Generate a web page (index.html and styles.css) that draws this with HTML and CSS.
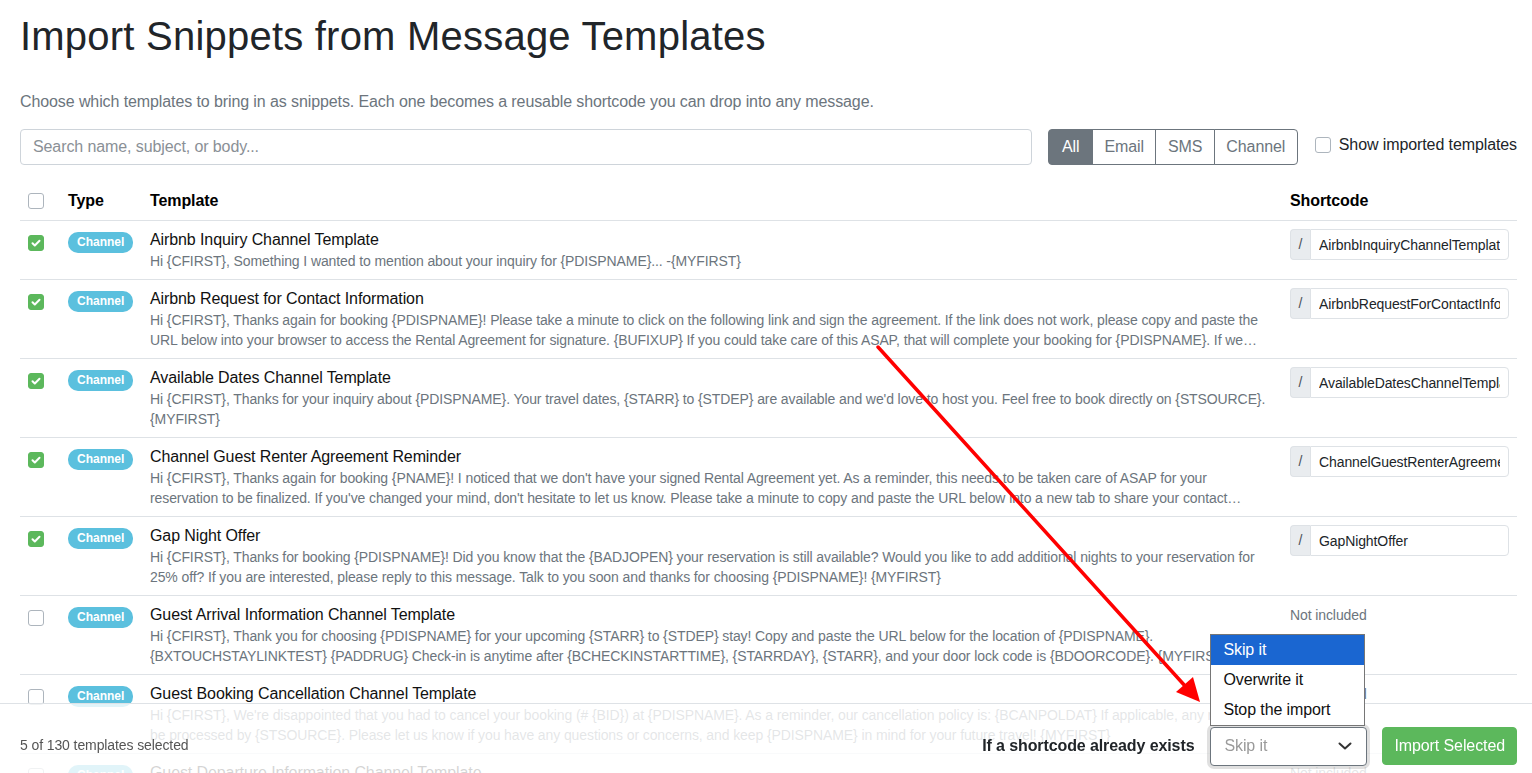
FILE: index.html
```html
<!DOCTYPE html>
<html lang="en">
<head>
<meta charset="utf-8">
<title>Import Snippets from Message Templates</title>
<link rel="stylesheet" href="styles.css">
</head>
<body>
<div class="page">
  <h1 class="title">Import Snippets from Message Templates</h1>
  <p class="lead">Choose which templates to bring in as snippets. Each one becomes a reusable shortcode you can drop into any message.</p>

  <div class="controls">
    <input class="search" type="text" placeholder="Search name, subject, or body...">
    <div class="btn-group">
      <button class="seg active">All</button>
      <button class="seg">Email</button>
      <button class="seg">SMS</button>
      <button class="seg">Channel</button>
    </div>
    <label class="show-imported"><span class="cb"></span>Show imported templates</label>
  </div>

  <table class="tpl-table">
    <colgroup>
      <col class="c-check"><col class="c-type"><col class="c-tpl"><col class="c-sc">
    </colgroup>
    <thead>
      <tr>
        <th><span class="cb"></span></th>
        <th>Type</th>
        <th>Template</th>
        <th>Shortcode</th>
      </tr>
    </thead>
    <tbody>
      <tr>
        <td><span class="cb on"><svg viewBox="0 0 16 16" width="16" height="16"><path d="M4.5 8.2l2.3 2.3 4.7-4.8" fill="none" stroke="#fff" stroke-width="2" stroke-linecap="round" stroke-linejoin="round"/></svg></span></td>
        <td><span class="badge">Channel</span></td>
        <td><div class="t-name">Airbnb Inquiry Channel Template</div><div class="t-body">Hi {CFIRST}, Something I wanted to mention about your inquiry for {PDISPNAME}... -{MYFIRST}</div></td>
        <td><div class="sc"><span class="sc-pre">/</span><input class="sc-in" type="text" value="AirbnbInquiryChannelTemplate"></div></td>
      </tr>
      <tr>
        <td><span class="cb on"><svg viewBox="0 0 16 16" width="16" height="16"><path d="M4.5 8.2l2.3 2.3 4.7-4.8" fill="none" stroke="#fff" stroke-width="2" stroke-linecap="round" stroke-linejoin="round"/></svg></span></td>
        <td><span class="badge">Channel</span></td>
        <td><div class="t-name">Airbnb Request for Contact Information</div><div class="t-body">Hi {CFIRST}, Thanks again for booking {PDISPNAME}! Please take a minute to click on the following link and sign the agreement. If the link does not work, please copy and paste the URL below into your browser to access the Rental Agreement for signature. {BUFIXUP} If you could take care of this ASAP, that will complete your booking for {PDISPNAME}. If we don't receive your signed agreement soon, your reservation may be cancelled. {MYFIRST}</div></td>
        <td><div class="sc"><span class="sc-pre">/</span><input class="sc-in" type="text" value="AirbnbRequestForContactInfo"></div></td>
      </tr>
      <tr>
        <td><span class="cb on"><svg viewBox="0 0 16 16" width="16" height="16"><path d="M4.5 8.2l2.3 2.3 4.7-4.8" fill="none" stroke="#fff" stroke-width="2" stroke-linecap="round" stroke-linejoin="round"/></svg></span></td>
        <td><span class="badge">Channel</span></td>
        <td><div class="t-name">Available Dates Channel Template</div><div class="t-body">Hi {CFIRST}, Thanks for your inquiry about {PDISPNAME}. Your travel dates, {STARR} to {STDEP} are available and we'd love to host you. Feel free to book directly on {STSOURCE}. {MYFIRST}</div></td>
        <td><div class="sc"><span class="sc-pre">/</span><input class="sc-in" type="text" value="AvailableDatesChannelTemplate"></div></td>
      </tr>
      <tr>
        <td><span class="cb on"><svg viewBox="0 0 16 16" width="16" height="16"><path d="M4.5 8.2l2.3 2.3 4.7-4.8" fill="none" stroke="#fff" stroke-width="2" stroke-linecap="round" stroke-linejoin="round"/></svg></span></td>
        <td><span class="badge">Channel</span></td>
        <td><div class="t-name">Channel Guest Renter Agreement Reminder</div><div class="t-body">Hi {CFIRST}, Thanks again for booking {PNAME}! I noticed that we don't have your signed Rental Agreement yet. As a reminder, this needs to be taken care of ASAP for your reservation to be finalized. If you've changed your mind, don't hesitate to let us know. Please take a minute to copy and paste the URL below into a new tab to share your contact information and sign the agreement. {MYFIRST}</div></td>
        <td><div class="sc"><span class="sc-pre">/</span><input class="sc-in" type="text" value="ChannelGuestRenterAgreementReminder"></div></td>
      </tr>
      <tr>
        <td><span class="cb on"><svg viewBox="0 0 16 16" width="16" height="16"><path d="M4.5 8.2l2.3 2.3 4.7-4.8" fill="none" stroke="#fff" stroke-width="2" stroke-linecap="round" stroke-linejoin="round"/></svg></span></td>
        <td><span class="badge">Channel</span></td>
        <td><div class="t-name">Gap Night Offer</div><div class="t-body">Hi {CFIRST}, Thanks for booking {PDISPNAME}! Did you know that the {BADJOPEN} your reservation is still available? Would you like to add additional nights to your reservation for 25% off? If you are interested, please reply to this message. Talk to you soon and thanks for choosing {PDISPNAME}! {MYFIRST}</div></td>
        <td><div class="sc"><span class="sc-pre">/</span><input class="sc-in" type="text" value="GapNightOffer"></div></td>
      </tr>
      <tr>
        <td><span class="cb"></span></td>
        <td><span class="badge">Channel</span></td>
        <td><div class="t-name">Guest Arrival Information Channel Template</div><div class="t-body">Hi {CFIRST}, Thank you for choosing {PDISPNAME} for your upcoming {STARR} to {STDEP} stay! Copy and paste the URL below for the location of {PDISPNAME}. {BXTOUCHSTAYLINKTEST} {PADDRUG} Check-in is anytime after {BCHECKINSTARTTIME}, {STARRDAY}, {STARR}, and your door lock code is {BDOORCODE}. {MYFIRST}</div></td>
        <td><div class="not-inc">Not included</div></td>
      </tr>
      <tr>
        <td><span class="cb"></span></td>
        <td><span class="badge">Channel</span></td>
        <td><div class="t-name">Guest Booking Cancellation Channel Template</div><div class="t-body">Hi {CFIRST}, We're disappointed that you had to cancel your booking (# {BID}) at {PDISPNAME}. As a reminder, our cancellation policy is: {BCANPOLDAT} If applicable, any refund will be processed by {STSOURCE}. Please let us know if you have any questions or concerns, and keep {PDISPNAME} in mind for your future travel! {MYFIRST}</div></td>
        <td><div class="not-inc">Not included</div></td>
      </tr>
      <tr>
        <td><span class="cb"></span></td>
        <td><span class="badge">Channel</span></td>
        <td><div class="t-name">Guest Departure Information Channel Template</div><div class="t-body">Hi {CFIRST}, Thank you for staying at {PDISPNAME}! We hope you enjoyed your stay. Check-out is at {BCHECKOUTTIME} on {STDEP}. {MYFIRST}</div></td>
        <td><div class="not-inc">Not included</div></td>
      </tr>
    </tbody>
  </table>
</div>

<div class="footer">
  <div class="sel-count">5 of 130 templates selected</div>
  <div class="footer-actions">
    <span class="exists-label">If a shortcode already exists</span>
    <div class="select-wrap">
      <ul class="dropdown">
        <li class="opt current">Skip it</li>
        <li class="opt">Overwrite it</li>
        <li class="opt">Stop the import</li>
      </ul>
      <div class="select">
        <span class="select-val">Skip it</span>
        <svg class="chev" viewBox="0 0 14 8" width="14" height="8"><path d="M1.5 1.5l5.5 5 5.5-5" fill="none" stroke="#333" stroke-width="2" stroke-linecap="round" stroke-linejoin="round"/></svg>
      </div>
    </div>
    <button class="btn-import">Import Selected</button>
  </div>
</div>

<svg class="annot" viewBox="0 0 1532 773" width="1532" height="773">
  <line x1="878" y1="347" x2="1186" y2="687" stroke="#ff0000" stroke-width="3.5" stroke-linecap="round"/>
  <polygon points="1200,702 1176,692 1193,677" fill="#ff0000"/>
</svg>
</body>
</html>
```

FILE: styles.css
```css
* { box-sizing: border-box; }

html, body {
  margin: 0;
  padding: 0;
  background: #fff;
  overflow: hidden;
  height: 773px;
}

body {
  font-family: "Liberation Sans", Arial, Helvetica, sans-serif;
  color: #212529;
  font-size: 16px;
  line-height: 1.5;
  letter-spacing: -0.1px;
  position: relative;
}

.page {
  padding: 12px 15px 0 20px;
}

.title {
  margin: 0;
  font-size: 40px;
  font-weight: 400;
  line-height: 48px;
  letter-spacing: 0.22px;
  color: #212529;
}

.lead {
  margin: 30px 0 0;
  font-size: 16px;
  line-height: 24px;
  color: #6c757d;
}

.controls {
  margin-top: 15px;
  display: flex;
  align-items: center;
  gap: 16px;
  height: 36px;
}

.search {
  flex: 1;
  height: 36px;
  border: 1px solid #ced4da;
  border-radius: 4px;
  padding: 6px 12px;
  font-family: inherit;
  font-size: 16px;
  letter-spacing: -0.1px;
  color: #212529;
  outline: none;
}
.search::placeholder { color: #8a9096; }

.btn-group {
  display: flex;
  height: 36px;
}
.seg {
  font-family: inherit;
  font-size: 16px;
  letter-spacing: -0.1px;
  line-height: 22px;
  height: 36px;
  padding: 6px 11.5px;
  background: #fff;
  color: #6c757d;
  border: 1px solid #6c757d;
  margin-left: -1px;
  border-radius: 0;
}
.seg:first-child { margin-left: 0; border-radius: 4px 0 0 4px; padding: 6px 12.5px; }
.seg:last-child { border-radius: 0 4px 4px 0; }
.seg.active { background: #6c757d; color: #fff; }

.show-imported {
  display: flex;
  align-items: center;
  gap: 8px;
  font-size: 16px;
  white-space: nowrap;
  margin-left: 1px;
  margin-top: -4px;
}

.cb {
  display: inline-block;
  width: 16px;
  height: 16px;
  border: 1px solid #adb5bd;
  border-radius: 3px;
  background: #fff;
  vertical-align: middle;
  position: relative;
}
.cb.on {
  background: #5cb85c;
  border-color: #5cb85c;
}
.cb.on svg {
  position: absolute;
  left: -1px;
  top: -1px;
}

.tpl-table {
  margin-top: 15px;
  width: 100%;
  border-collapse: collapse;
  table-layout: fixed;
}
.c-check { width: 40px; }
.c-type { width: 82px; }
.c-sc { width: 235px; }

.tpl-table th {
  text-align: left;
  font-weight: 700;
  font-size: 16px;
  line-height: 24px;
  padding: 9px 8px 7px;
  border-bottom: 1px solid #dee2e6;
  color: #000;
}
.tpl-table th .cb { margin-top: -2px; }

.tpl-table td {
  vertical-align: top;
  padding: 8px;
  border-bottom: 1px solid #dee2e6;
}
.tpl-table td:first-child .cb { margin-top: 2px; }

.badge {
  display: inline-block;
  background: #5bc0de;
  color: #fff;
  font-size: 12px;
  font-weight: 700;
  letter-spacing: 0;
  line-height: 13px;
  padding: 4px 9px 4px;
  border-radius: 10px;
  margin-top: 1px;
}

.t-name {
  font-size: 16px;
  line-height: 22px;
  color: #111;
}
.t-body {
  font-size: 14px;
  line-height: 20px;
  color: #6c757d;
  display: -webkit-box;
  -webkit-line-clamp: 2;
  -webkit-box-orient: vertical;
  overflow: hidden;
}

.sc {
  display: flex;
  height: 31px;
}
.sc-pre {
  width: 20px;
  flex: none;
  background: #e9ecef;
  border: 1px solid #dee2e6;
  border-right: 0;
  border-radius: 4px 0 0 4px;
  font-size: 14px;
  line-height: 29px;
  text-align: center;
  color: #495057;
}
.sc-in {
  flex: 1;
  min-width: 0;
  border: 1px solid #dee2e6;
  border-radius: 0 4px 4px 0;
  padding: 4px 8px 4px 8px;
  font-family: inherit;
  font-size: 14px;
  letter-spacing: -0.1px;
  color: #212529;
  outline: none;
  background: #fff;
}

.not-inc {
  font-size: 14px;
  line-height: 22px;
  color: #6c757d;
}

.footer {
  position: fixed;
  left: 0;
  right: 0;
  top: 703px;
  height: 70px;
  border-top: 1px solid #dee2e6;
  background: rgba(255, 255, 255, 0.82);
  padding: 3px 15px 0 20px;
  display: flex;
  align-items: flex-start;
  justify-content: space-between;
  z-index: 3;
}
.sel-count {
  font-size: 14px;
  line-height: 20px;
  color: #555;
  margin-top: 28px;
}
.footer-actions {
  display: flex;
  align-items: center;
  margin-top: 19px;
  height: 40px;
}
.exists-label {
  font-weight: 700;
  font-size: 16px;
  margin-right: 16px;
  color: #212529;
}
.select-wrap {
  position: relative;
  width: 157px;
  height: 39px;
  margin-right: 15px;
}
.select {
  height: 39px;
  border: 1px solid #6c757d;
  border-radius: 4px;
  box-shadow: 0 0 0 3px rgba(0, 0, 0, 0.12);
  background: #fff;
  display: flex;
  align-items: center;
  justify-content: space-between;
  padding: 0 14px 0 13px;
}
.select-val {
  font-size: 16px;
  color: #9a9a9a;
}
.chev { display: block; }

.dropdown {
  position: absolute;
  left: 0;
  width: 155px;
  bottom: 40px;
  margin: 0;
  padding: 0;
  list-style: none;
  background: #fff;
  border: 1px solid #767676;
  z-index: 10;
}
.opt {
  height: 30px;
  line-height: 30px;
  padding-left: 12px;
  font-size: 16px;
  color: #111;
}
.opt.current {
  background: #1a66d1;
  color: #fff;
}

.btn-import {
  height: 38px;
  padding: 0 11px;
  border: 1px solid #5cb85c;
  border-radius: 4px;
  background: #5cb85c;
  color: #fff;
  font-family: inherit;
  font-size: 16px;
  letter-spacing: -0.1px;
}

.annot {
  position: absolute;
  left: 0;
  top: 0;
  pointer-events: none;
  z-index: 5;
}
```
